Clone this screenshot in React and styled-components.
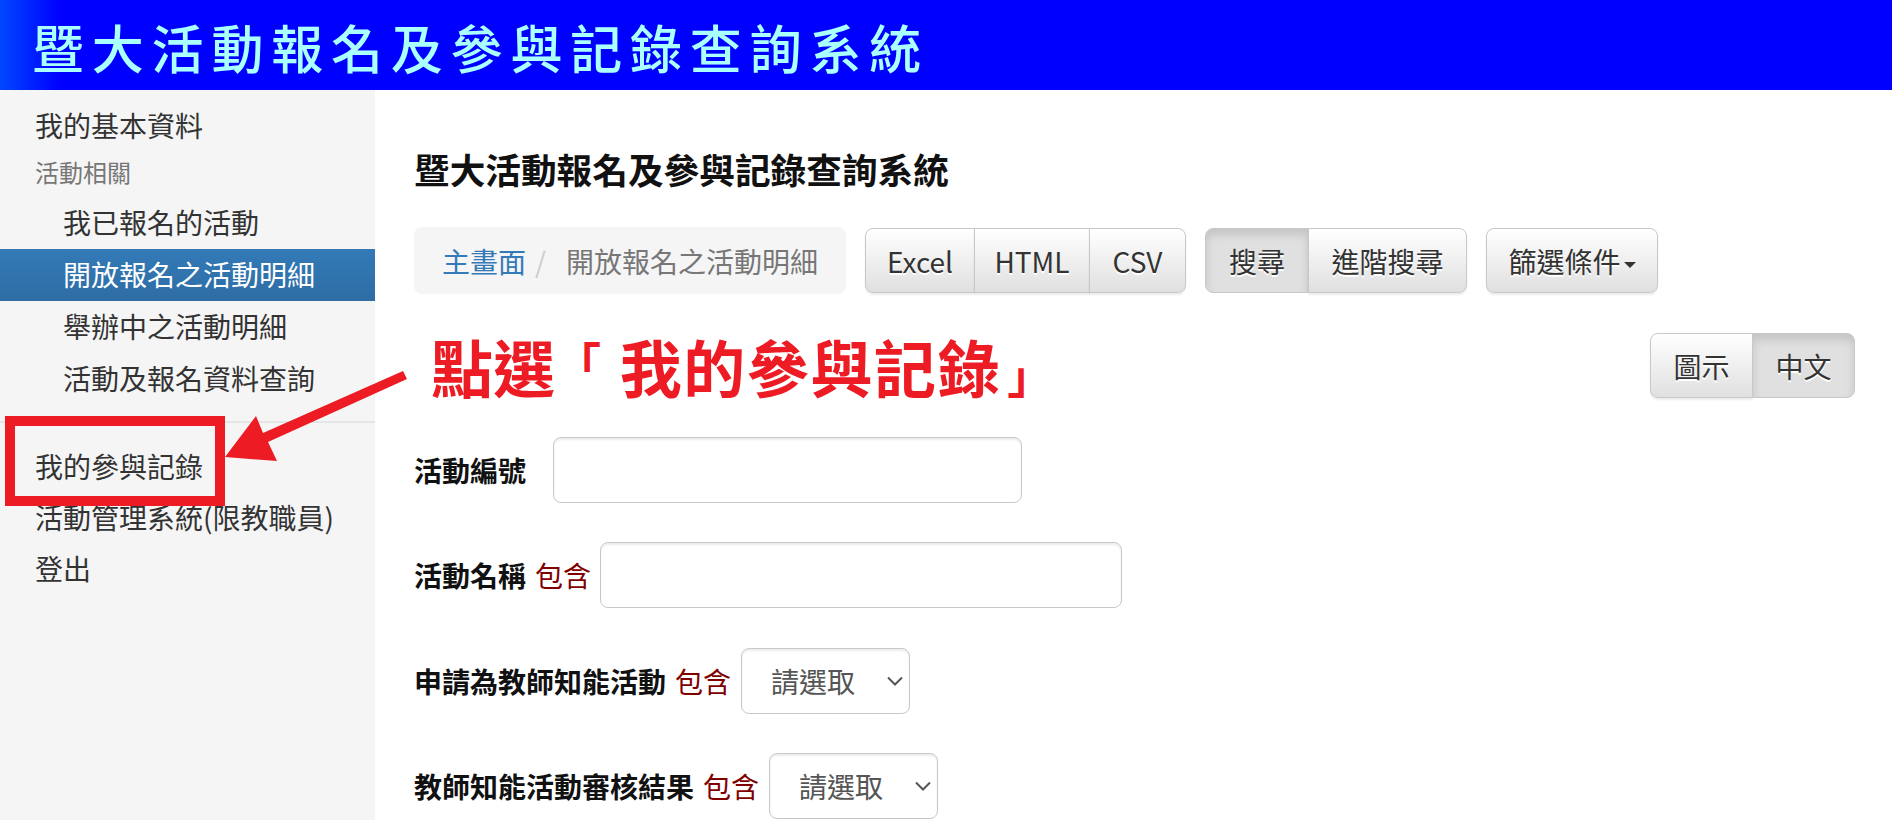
import React from "react";
import styled, { createGlobalStyle } from "styled-components";

const Global = createGlobalStyle`
  html, body { margin: 0; padding: 0; height: 820px; overflow: hidden; background: #fff; }
  body { font-family: "Noto Sans CJK TC", "Noto Sans", sans-serif; font-size: 28px; color: #333; }
  * { box-sizing: border-box; }
`;
const Page = styled.div`position: relative; width: 1892px; height: 820px; overflow: hidden;`;
const Banner = styled.header`
  height: 90px; padding: 3px 0 0 32px; display: flex; align-items: center;
  background: linear-gradient(90deg, #0048ff 0, #0000ff 60px);
`;
const BannerTitle = styled.div`
  font-size: 52px; line-height: 62px; letter-spacing: 7.8px; color: #aaffff; font-weight: 500;
  white-space: nowrap; filter: blur(0.6px);
`;
const Body = styled.div`display: flex; height: 730px;`;
const Sidebar = styled.nav`width: 375px; flex: none; background: #f5f5f5; padding-top: 10px;`;
const NavItem = styled.a`
  display: block; height: ${p => (p.$nested ? 52 : 51)}px; line-height: ${p => (p.$nested ? 51 : 50)}px; white-space: nowrap;
  padding-left: ${p => (p.$nested ? 63 : 35)}px;
  color: ${p => (p.$active ? "#fff" : "#333")};
  background: ${p => (p.$active ? "linear-gradient(#337ab7, #2e6da4)" : "none")};
`;
const NavHeading = styled.div`height: 46px; line-height: 41px; padding-left: 35px; font-size: 24px; color: #777;`;
const Divider = styled.hr`height: 2px; margin: 16px 0 18px; border: 0; background: #e5e5e5;`;
const Main = styled.main`flex: 1; padding: 0 37px 0 39px;`;
const Title = styled.h1`margin: 55px 0 0; height: 48px; line-height: 48px; font-size: 35.66px; font-weight: 700; color: #111; white-space: nowrap; letter-spacing: 0;`;
const Toolbar = styled.div`display: flex; align-items: center; margin-top: 34px; height: 67px;`;
const Breadcrumb = styled.div`
  width: 432px; height: 67px; background: #f5f5f5; border-radius: 8px; padding-left: 28px;
  display: flex; align-items: center; color: #777; white-space: nowrap; margin-right: 19px;
`;
const Crumb = styled.span`color: #337ab7;`;
const Slash = styled.span`color: #ccc; margin: 0 20px 0 9px;`;
const Group = styled.div`display: flex; margin-right: ${p => p.$gap || 0}px;`;
const Btn = styled.button`
  height: 65px; width: ${p => p.$w}px; padding: 0; font: inherit; color: #333; white-space: nowrap;
  border: 1px solid #c8c8c8; margin-left: -1px;
  background: ${p => (p.$on ? "#e0e0e0" : "linear-gradient(#fff, #e0e0e0)")};
  box-shadow: ${p => (p.$on ? "inset 0 6px 10px rgba(0,0,0,.125)" : "inset 0 2px 0 rgba(255,255,255,.15), 0 2px 2px rgba(0,0,0,.075)")};
  text-shadow: 0 2px 0 #fff;
  &:first-child { margin-left: 0; border-radius: 8px 0 0 8px; }
  &:last-child { border-radius: 0 8px 8px 0; }
  &:only-child { border-radius: 8px; }
`;
const Caret = styled.span`
  display: inline-block; margin-left: 3px; vertical-align: middle;
  border-top: 6px solid #333; border-left: 6.5px solid transparent; border-right: 6.5px solid transparent;
`;
const ToggleRow = styled.div`display: flex; justify-content: flex-end; margin-top: 39px; height: 65px;`;
const Form = styled.form`margin-top: 39px; display: flex; flex-direction: column; gap: 39.4px;`;
const Field = styled.div`display: flex; align-items: center; height: 66px; white-space: nowrap;`;
const Label = styled.label`font-weight: 700; color: #111; margin-right: ${p => p.$gap || 9}px;`;
const Contains = styled.span`color: #800000; margin-right: 9px;`;
const TextInput = styled.input`
  width: ${p => p.$w}px; height: 66px; border: 1px solid #c8c8c8; border-radius: 8px; background: #fff;
  box-shadow: inset 0 2px 2px rgba(0,0,0,.075); padding: 0 24px; font: inherit;
`;
const SelectWrap = styled.div`position: relative; width: 169px; height: 66px; margin-left: 1px;`;
const Select = styled.select`
  appearance: none; width: 100%; height: 100%; border: 1px solid #c8c8c8; border-radius: 8px; background: #fff;
  box-shadow: inset 0 2px 2px rgba(0,0,0,.075); padding: 0 0 0 29px; font: inherit; color: #555;
`;
const Chevron = styled.svg`position: absolute; right: 6px; top: 28px; pointer-events: none;`;
const Callout = styled.div`
  position: absolute; left: 431px; top: 328px; font-size: 62px; line-height: 76px; font-weight: 700;
  color: #ed1c24; white-space: pre; letter-spacing: 1.6px;
`;
const Lead = styled.span`letter-spacing: 0;`;
const OpenQuote = styled.span`
  position: relative; top: -12px; font-size: 46px; line-height: 46px; margin-right: 17px;
`;
const CloseQuote = styled.span`font-size: 46px; line-height: 46px; margin-left: 6px;`;
const Overlay = styled.svg`position: absolute; left: 0; top: 0; pointer-events: none;`;

const SelectField = ({ label }) => (
  <Field>
    <Label>{label}</Label>
    <Contains>包含</Contains>
    <SelectWrap>
      <Select defaultValue=""><option value="">請選取</option></Select>
      <Chevron width="18" height="11" viewBox="0 0 18 11">
        <path d="M2 1.5 L9 8.5 L16 1.5" fill="none" stroke="#555" strokeWidth="2" />
      </Chevron>
    </SelectWrap>
  </Field>
);

export default function App() {
  return (
    <Page>
      <Global />
      <Banner><BannerTitle>暨大活動報名及參與記錄查詢系統</BannerTitle></Banner>
      <Body>
        <Sidebar>
          <NavItem>我的基本資料</NavItem>
          <NavHeading>活動相關</NavHeading>
          <NavItem $nested>我已報名的活動</NavItem>
          <NavItem $nested $active>開放報名之活動明細</NavItem>
          <NavItem $nested>舉辦中之活動明細</NavItem>
          <NavItem $nested>活動及報名資料查詢</NavItem>
          <Divider />
          <NavItem>我的參與記錄</NavItem>
          <NavItem>活動管理系統(限教職員)</NavItem>
          <NavItem>登出</NavItem>
        </Sidebar>
        <Main>
          <Title>暨大活動報名及參與記錄查詢系統</Title>
          <Toolbar>
            <Breadcrumb><Crumb>主畫面</Crumb><Slash>/</Slash>開放報名之活動明細</Breadcrumb>
            <Group $gap={19}>
              <Btn $w={110}>Excel</Btn><Btn $w={116}>HTML</Btn><Btn $w={97}>CSV</Btn>
            </Group>
            <Group $gap={19}>
              <Btn $w={104} $on>搜尋</Btn><Btn $w={159}>進階搜尋</Btn>
            </Group>
            <Group><Btn $w={172}>篩選條件<Caret /></Btn></Group>
          </Toolbar>
          <ToggleRow>
            <Group><Btn $w={103}>圖示</Btn><Btn $w={103} $on>中文</Btn></Group>
          </ToggleRow>
          <Form>
            <Field><Label $gap={27}>活動編號</Label><TextInput $w={469} /></Field>
            <Field><Label>活動名稱</Label><Contains>包含</Contains><TextInput $w={522} /></Field>
            <SelectField label="申請為教師知能活動" />
            <SelectField label="教師知能活動審核結果" />
          </Form>
        </Main>
      </Body>
      <Callout><Lead>點選</Lead><OpenQuote>「</OpenQuote>我的參與記錄<CloseQuote>」</CloseQuote></Callout>
      <Overlay width="1892" height="820" viewBox="0 0 1892 820">
        <rect x="10" y="421" width="210" height="80" fill="none" stroke="#ed1c24" strokeWidth="10" />
        <path d="M403 371 L407 379 L268 442 L277 461 L225 457 L256 416 L263 433 Z" fill="#ed1c24" />
      </Overlay>
    </Page>
  );
}
